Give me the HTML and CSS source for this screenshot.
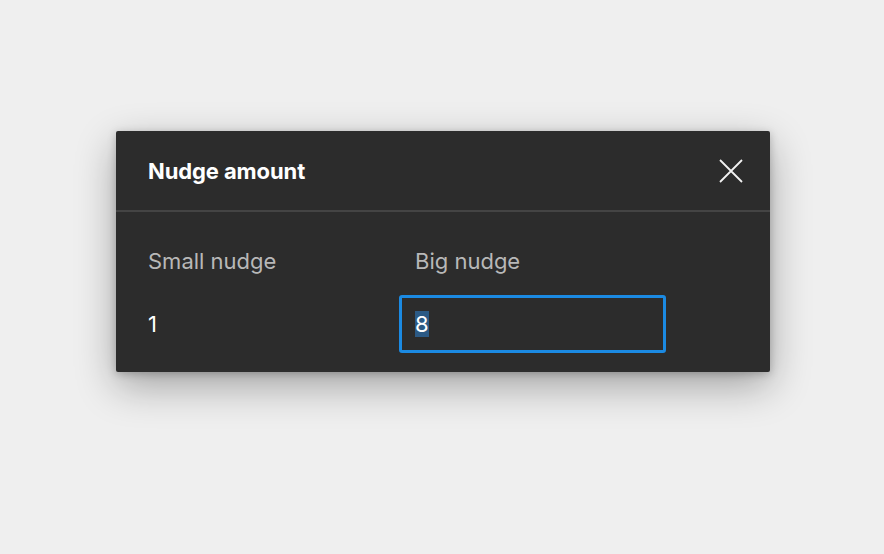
FILE: index.html
```html
<!DOCTYPE html>
<html>
<head>
<meta charset="utf-8">
<link rel="stylesheet" href="styles.css">
</head>
<body>
<div class="page">
  <div class="dialog">
    <div class="dialog-header">
      <div class="dialog-title">Nudge amount</div>
      <button class="close-btn" aria-label="Close">
        <svg width="24" height="24" viewBox="0 0 24 24"><path d="M1 1 L23 23 M23 1 L1 23" stroke="#f2f2f2" stroke-width="1.8" fill="none"/></svg>
      </button>
    </div>
    <div class="dialog-body">
      <div class="field">
        <div class="field-label">Small nudge</div>
        <div class="field-input"><span class="value">1</span></div>
      </div>
      <div class="field">
        <div class="field-label">Big nudge</div>
        <div class="field-input focused"><span class="value selected">8</span></div>
      </div>
    </div>
  </div>
</div>
</body>
</html>
```
FILE: styles.css
```css
html, body {
  margin: 0;
  padding: 0;
  background: #efefef;
}
body {
  font-family: Inter, "Noto Sans", "Liberation Sans", sans-serif;
  width: 884px;
  height: 554px;
  overflow: hidden;
}
.page {
  padding: 131px 0 0 116px;
}
.dialog {
  width: 654px;
  height: 241px;
  box-sizing: border-box;
  background: #2c2c2c;
  border-radius: 2px;
  box-shadow: 0 14px 40px rgba(0, 0, 0, 0.32), 0 2px 8px rgba(0, 0, 0, 0.22);
  display: flex;
  flex-direction: column;
}
.dialog-header {
  height: 81px;
  box-sizing: border-box;
  border-bottom: 2px solid #444444;
  display: flex;
  align-items: center;
  justify-content: space-between;
  padding: 0 27px 0 32px;
}
.dialog-title {
  color: #ffffff;
  font-size: 22px;
  font-weight: 700;
  letter-spacing: -0.1px;
}
.close-btn {
  background: none;
  border: none;
  padding: 0;
  width: 24px;
  height: 24px;
  display: flex;
  margin-top: 1px;
}
.dialog-body {
  display: grid;
  grid-template-columns: 266px 267px;
  column-gap: 1px;
  padding: 36px 16px 0 16px;
}
.field {
  display: flex;
  flex-direction: column;
  gap: 21px;
}
.field-label {
  color: #b8b8b8;
  font-size: 22px;
  line-height: 26px;
  padding-left: 16px;
}
.field-input {
  height: 58px;
  box-sizing: border-box;
  border: 3px solid transparent;
  border-radius: 3px;
  padding-left: 13px;
  display: flex;
  align-items: center;
  color: #ffffff;
  font-size: 22px;
}
.field-input.focused {
  border-color: #1b8ae2;
}
.value {
  line-height: 26px;
}
.value.selected {
  background: #2c5a85;
}
```
